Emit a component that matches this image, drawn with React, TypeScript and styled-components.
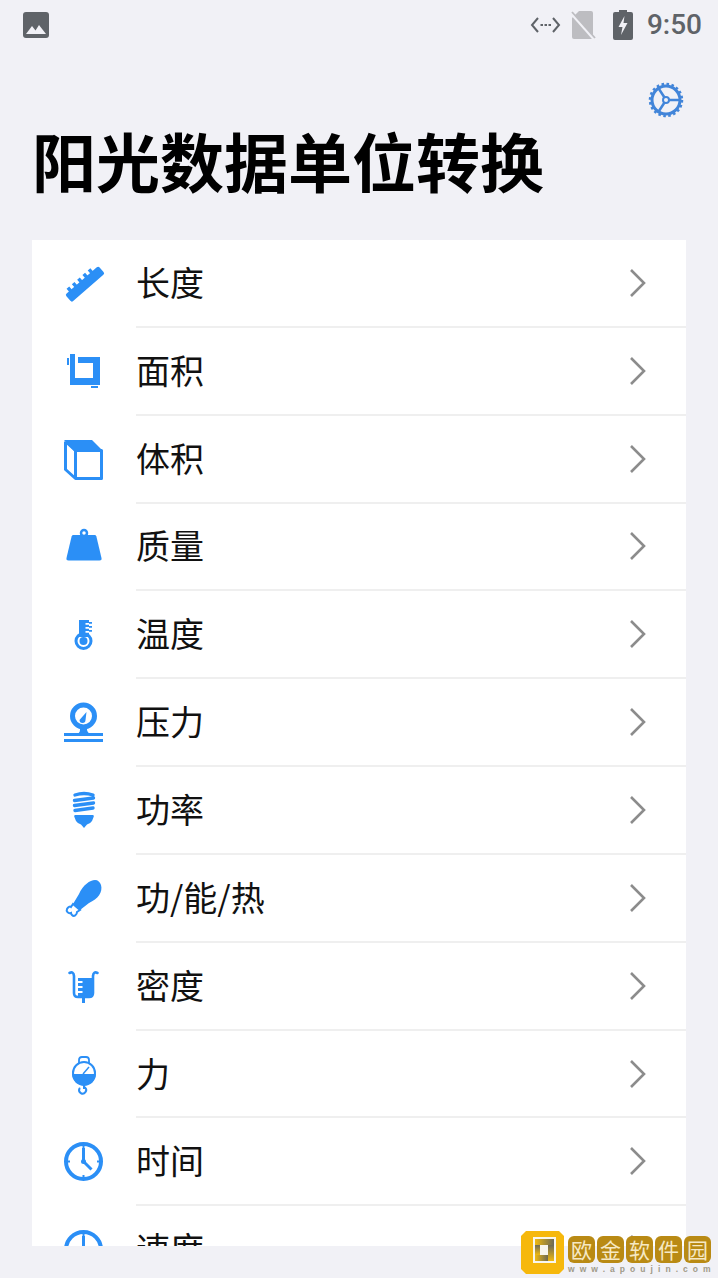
import React from "react";
import styled, { createGlobalStyle } from "styled-components";

const BLUE = "#2b8ff6";
const GREY = "#5f6368";

const GlobalStyle = createGlobalStyle`
    html, body {
        margin: 0;
        padding: 0;
        background: #f1f1f6;
    }
`;

const Page = styled.div`
    position: relative;
    width: 718px;
    height: 1278px;
    overflow: hidden;
    background: #f1f1f6;
    font-family: "Noto Sans CJK SC", "Noto Sans", sans-serif;
`;

const StatusBar = styled.div`
    display: flex;
    align-items: center;
    justify-content: space-between;
    height: 49px;
    padding: 0 16px 0 23px;
`;

const StatusRight = styled.div`
    display: flex;
    align-items: center;
`;

const Clock = styled.span`
    margin-left: 14px;
    font-family: Roboto, sans-serif;
    font-size: 28px;
    font-weight: 500;
    color: ${GREY};
`;

const GearRow = styled.div`
    display: flex;
    justify-content: flex-end;
    height: 38px;
    margin-top: 33px;
    padding-right: 34px;
`;

const Title = styled.h1`
    margin: 0;
    padding: 0 0 0 32px;
    height: 80px;
    line-height: 78px;
    font-size: 64px;
    font-weight: 700;
    color: #000;
    white-space: nowrap;
`;

const ListPanel = styled.div`
    margin: 40px 32px 0;
    height: 1006px;
    overflow: hidden;
    background: #fff;
`;

const Row = styled.div`
    display: flex;
    height: 87.85px;
`;

const IconCell = styled.div`
    flex: none;
    display: flex;
    align-items: center;
    width: 104px;
    padding-left: 32px;
    box-sizing: border-box;
`;

const RowBody = styled.div`
    flex: 1;
    display: flex;
    align-items: center;
    justify-content: space-between;
    padding-right: 39px;
    border-bottom: 2px solid #efefef;
`;

const Label = styled.span`
    position: relative;
    top: -1px;
    font-size: 34px;
    line-height: 1;
    color: #111;
`;

const Watermark = styled.div`
    position: absolute;
    left: 521px;
    top: 1231px;
    display: flex;
    gap: 4px;
`;

const MarkText = styled.div`
    display: flex;
    flex-direction: column;
    width: 143px;
    padding-top: 5px;
`;

const Tiles = styled.div`
    display: flex;
    gap: 2px;
`;

const Tile = styled.span`
    display: flex;
    align-items: center;
    justify-content: center;
    width: 27px;
    height: 27px;
    border-radius: 6px;
    background: #b98a14;
    color: #f6e9c4;
    font-size: 21px;
    line-height: 1;
`;

const Url = styled.span`
    margin-top: 1px;
    font-family: "Liberation Sans", sans-serif;
    font-size: 8.5px;
    font-weight: 700;
    line-height: 11px;
    letter-spacing: 5.05px;
    color: #a09a88;
    white-space: nowrap;
`;

const Icon: React.FC<{ children: React.ReactNode }> = ({ children }) => (
    <svg width="40" height="40" viewBox="0 0 40 40" style={{ overflow: "visible" }}>
        {children}
    </svg>
);

const Ruler = () => (
    <Icon>
        <g transform="rotate(-41 20 19)">
            <rect x="-2" y="15.5" width="44" height="10" rx="2" fill={BLUE} />
            <path d="M3 12h3.500v5H3zM10 12h3.500v5H10zM17 12h3.500v5H17zM24 12h3.500v5H24zM31 12h3.500v5H31z" fill={BLUE} />
        </g>
    </Icon>
);

const Crop = () => (
    <Icon>
        <path d="M6 2h5v24h18V11H14V5h22v28H6z" fill={BLUE} />
        <path d="M3 6h2v7H3zM27 34h7v2h-7z" fill={BLUE} />
    </Icon>
);

const Cube = () => (
    <Icon>
        <path d="M0 0h28l11 11H10z" fill={BLUE} />
        <path
            d="M1.5 1.5v28l10 9h26V10.5h-26v28M1.5 1.5l10 9"
            fill="none"
            stroke={BLUE}
            strokeWidth="3"
            strokeLinejoin="round"
        />
    </Icon>
);

const Weight = () => (
    <Icon>
        <circle cx="20" cy="6" r="3" fill="none" stroke={BLUE} strokeWidth="2.5" />
        <path d="M9 8h22q1 0 1.400 1.500L37.500 31q.5 2.500-2 2.500H4.500q-2.500 0-2-2.500L7.600 9.500Q8 8 9 8z" fill={BLUE} />
    </Icon>
);

const Thermometer = () => (
    <Icon>
        <circle cx="19.500" cy="26" r="7.500" fill="#fff" stroke={BLUE} strokeWidth="3" />
        <circle cx="19.500" cy="26" r="4" fill={BLUE} />
        <path d="M15 5h10v17H15z" fill={BLUE} />
        <path d="M21.500 8H25v1.800h-3.500zM21.500 12H25v1.800h-3.500zM21.500 16H25v1.800h-3.500z" fill="#fff" />
        <path d="M25 7h3v1.800h-3zM25 11h3v1.800h-3zM25 15h3v1.800h-3z" fill={BLUE} />
    </Icon>
);

const Gauge = () => (
    <Icon>
        <circle cx="19.500" cy="13" r="11" fill="none" stroke={BLUE} strokeWidth="5" />
        <path d="M16 23h7v4q1 4 5 4H11q5 0 5-4z" fill={BLUE} />
        <path d="M15.500 17l7-8-1 8a3 3 0 0 1-6 0z" fill={BLUE} />
        <path d="M0 30h39v3H0zM0 36h39v3H0z" fill={BLUE} />
    </Icon>
);

const Bulb = () => (
    <Icon>
        <path
            d="M11 4q9-3 18 0M10.500 9.500L29.500 7M10.500 14.500L29.500 12M11 19.500L29 17"
            fill="none"
            stroke={BLUE}
            strokeWidth="3.400"
            strokeLinecap="round"
        />
        <path d="M11 24h18q1 0 .8 1.500L28 30q-2 3-5 3.500L20 37l-3-3.500q-3-.5-5-3.500l-1.800-4.500Q10 24 11 24z" fill={BLUE} />
    </Icon>
);

const Drumstick = () => (
    <Icon>
        <path
            d="M37 6c2 7-3 14-12 18l-9 7-7-6 6-10C19 6 26 1 31 1c3 0 5 2 6 5z"
            fill={BLUE}
        />
        <path
            d="M9 25l7 6-3 2c0 3-3 5-5 3-1-1-1-2-1-2-3 1-5-2-4-4s3-3 4-2z"
            fill="#fff"
            stroke={BLUE}
            strokeWidth="2"
        />
    </Icon>
);

const Beaker = () => (
    <Icon>
        <path
            d="M5.500 6q4-2 4.500 3v17q0 4 4 4h11q4 0 4-4V9q.5-5 4.500-3"
            fill="none"
            stroke={BLUE}
            strokeWidth="2.600"
            strokeLinecap="round"
        />
        <path d="M14 11h15v15q0 3-3 3H14z" fill={BLUE} />
        <path d="M14 14h4.500v2H14zM14 19h4.500v2H14zM14 24h4.500v2H14z" fill="#fff" />
        <path d="M18 30h3v6h-3z" fill={BLUE} />
    </Icon>
);

const HangScale = () => (
    <Icon>
        <path d="M15 9V5q0-3 3-3h4q3 0 3 3v4" fill="none" stroke={BLUE} strokeWidth="1.800" />
        <circle cx="20" cy="18" r="11" fill="#fff" stroke={BLUE} strokeWidth="2" />
        <path d="M8 19h24c0 7-6 12-12 12S8 26 8 19z" fill={BLUE} />
        <path d="M19 19l6-7" stroke={BLUE} strokeWidth="1.500" />
        <path d="M20 30v4" stroke={BLUE} strokeWidth="2" />
        <path d="M15.500 33.500a3.500 3.500 0 1 0 5.500-1" fill="none" stroke={BLUE} strokeWidth="2" strokeLinecap="round" />
    </Icon>
);

const ClockFace = () => (
    <Icon>
        <circle cx="19.500" cy="19.500" r="17.500" fill="none" stroke={BLUE} strokeWidth="4" />
        <path
            d="M19.500 6v13.500l8 8"
            fill="none"
            stroke={BLUE}
            strokeWidth="3"
            strokeLinejoin="round"
        />
        <circle cx="19.500" cy="19.500" r="2.500" fill={BLUE} />
        <path d="M18.500 4h2v2h-2zM18.500 33h2v2h-2zM4 18.500h2v2H4zM33 18.500h2v2h-2z" fill={BLUE} />
    </Icon>
);

const Chevron = () => (
    <svg width="18" height="30" viewBox="0 0 18 30">
        <path d="M2 2l13 13L2 28" fill="none" stroke="#8c8c8c" strokeWidth="2.600" />
    </svg>
);

const Gear = () => (
    <svg width="36" height="36" viewBox="0 0 36 36">
        <circle cx="18" cy="18" r="14" fill="none" stroke="#4285d9" strokeWidth="3" />
        <circle cx="18" cy="18" r="15.500" fill="none" stroke="#4285d9" strokeWidth="3.500" strokeDasharray="2.500 2.370" />
        <circle cx="18" cy="18" r="3" fill="none" stroke="#4285d9" strokeWidth="2" />
        <path d="M21 18h11M16.500 15.500L10 5.500M16.500 20.500L10 30.500" stroke="#4285d9" strokeWidth="2.500" />
    </svg>
);

const ImageNotice = () => (
    <svg width="26" height="26" viewBox="0 0 26 26">
        <rect width="26" height="26" rx="3" fill={GREY} />
        <path d="M3 22l6-8 3.500 4.500L16 13l7 9z" fill="#f1f1f6" />
    </svg>
);

const CodeSignal = () => (
    <svg width="31" height="20" viewBox="0 0 31 20">
        <path d="M8 3L2 10l6 7M23 3l6 7-6 7" fill="none" stroke={GREY} strokeWidth="2" />
        <path d="M10.500 9h2.500v2h-2.500zM14.500 9H17v2h-2.500zM18.500 9H21v2h-2.500z" fill={GREY} />
    </svg>
);

const NoSim = () => (
    <svg width="25" height="28" viewBox="0 0 25 28" style={{ marginLeft: 10 }}>
        <path d="M8 0h12q2 0 2 2v24q0 2-2 2H3q-2 0-2-2V7z" fill="#bdbdc1" />
        <path d="M0 2l23 26" stroke="#f1f1f6" strokeWidth="3" />
        <path d="M1 1l23 26" stroke="#bdbdc1" strokeWidth="1.800" />
    </svg>
);

const Battery = () => (
    <svg width="20" height="30" viewBox="0 0 20 30" style={{ marginLeft: 17 }}>
        <path
            d="M6 0h8v2h4q2 0 2 2v24q0 2-2 2H2q-2 0-2-2V4q0-2 2-2h4z"
            fill={GREY}
        />
        <path d="M11.500 6L5.500 17h4L8 25l6.500-12h-4z" fill="#f1f1f6" />
    </svg>
);

const LogoMark = () => (
    <svg width="43" height="43" viewBox="0 0 43 43">
        <defs>
            <linearGradient id="barH" x1="0" y1="0" x2="1" y2="0">
                <stop offset="0" stopColor="#f0b90f" />
                <stop offset="1" stopColor="#6d6a55" />
            </linearGradient>
            <linearGradient id="barV" x1="0" y1="0" x2="0" y2="1">
                <stop offset="0" stopColor="#6d6a55" />
                <stop offset="1" stopColor="#f0b90f" />
            </linearGradient>
        </defs>
        <path d="M5 0h33l5 5v33l-5 5H5l-5-5V5z" fill="#f6b80c" />
        <path d="M12 6h23v26H12z" fill="#f8f6ee" />
        <path d="M14 8h19v6H14z" fill="url(#barH)" />
        <path d="M27 14h6v16h-6z" fill="url(#barV)" />
        <path d="M14 24h13v6H14z" fill="url(#barH)" />
        <path d="M14 14h5v10h-5z" fill="url(#barV)" />
    </svg>
);

const UNITS: { label: string; icon: React.ReactNode }[] = [
    { label: "长度", icon: <Ruler /> },
    { label: "面积", icon: <Crop /> },
    { label: "体积", icon: <Cube /> },
    { label: "质量", icon: <Weight /> },
    { label: "温度", icon: <Thermometer /> },
    { label: "压力", icon: <Gauge /> },
    { label: "功率", icon: <Bulb /> },
    { label: "功/能/热", icon: <Drumstick /> },
    { label: "密度", icon: <Beaker /> },
    { label: "力", icon: <HangScale /> },
    { label: "时间", icon: <ClockFace /> },
    { label: "速度", icon: <ClockFace /> },
];

export default function App() {
    return (
        <Page>
            <GlobalStyle />
            <StatusBar>
                <ImageNotice />
                <StatusRight>
                    <CodeSignal />
                    <NoSim />
                    <Battery />
                    <Clock>9:50</Clock>
                </StatusRight>
            </StatusBar>
            <GearRow>
                <Gear />
            </GearRow>
            <Title>阳光数据单位转换</Title>
            <ListPanel>
                {UNITS.map((unit) => (
                    <Row key={unit.label}>
                        <IconCell>{unit.icon}</IconCell>
                        <RowBody>
                            <Label>{unit.label}</Label>
                            <Chevron />
                        </RowBody>
                    </Row>
                ))}
            </ListPanel>
            <Watermark>
                <LogoMark />
                <MarkText>
                    <Tiles>
                        {["欧", "金", "软", "件", "园"].map((c) => (
                            <Tile key={c}>{c}</Tile>
                        ))}
                    </Tiles>
                    <Url>www.apoujin.com</Url>
                </MarkText>
            </Watermark>
        </Page>
    );
}
